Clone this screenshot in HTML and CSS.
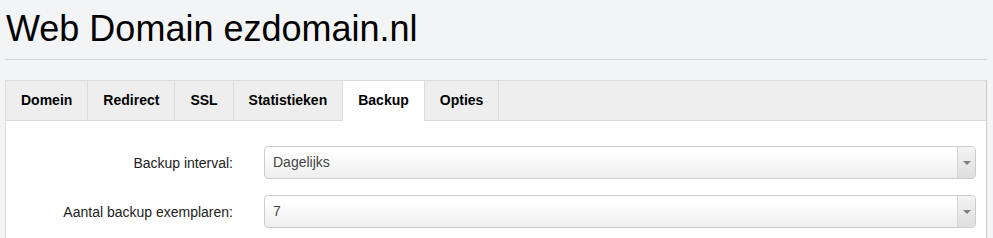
FILE: index.html
```html
<!DOCTYPE html>
<html>
<head>
<meta charset="utf-8">
<meta name="viewport" content="width=device-width">
<link rel="stylesheet" href="styles.css">
</head>
<body>
  <div class="page">
    <h1 class="title">Web Domain ezdomain.nl</h1>
    <hr class="rule">
    <div class="panel">
      <ul class="tabs">
        <li>Domein</li>
        <li>Redirect</li>
        <li>SSL</li>
        <li>Statistieken</li>
        <li class="active">Backup</li>
        <li>Opties</li>
      </ul>
      <div class="panel-body">
        <div class="field">
          <label>Backup interval:</label>
          <div class="select"><span class="value">Dagelijks</span><span class="arrow"></span></div>
        </div>
        <div class="field">
          <label>Aantal backup exemplaren:</label>
          <div class="select"><span class="value">7</span><span class="arrow"></span></div>
        </div>
      </div>
    </div>
  </div>
</body>
</html>
```

FILE: styles.css
```css
html, body {
  margin: 0;
  background: #f3f4f6;
  font-family: "Liberation Sans", Arial, sans-serif;
  color: #000;
}
.page {
  padding: 0 6px 0 5px;
}
.title {
  margin: 9px 0 0 1px;
  font-size: 36px;
  line-height: 40px;
  font-weight: normal;
}
.rule {
  margin: 10px 0 20px 0;
  border: 0;
  border-top: 1px solid #d3d4d6;
  height: 0;
}
.panel {
  background: #fff;
  border: 1px solid #dcdcdc;
  border-right-color: #c8c8c8;
  border-bottom: 0;
}
.tabs {
  display: flex;
  margin: 0;
  padding: 0;
  list-style: none;
  background: #eeeeee;
  border-bottom: 1px solid #dcdcdc;
  height: 39px;
}
.tabs li {
  padding: 0 15px;
  border-right: 1px solid #dcdcdc;
  font-size: 14px;
  font-weight: bold;
  line-height: 39px;
}
.tabs li.active {
  background: #fff;
  height: 40px;
}
.panel-body {
  padding: 25px 10px 10px 0;
  display: flex;
  flex-direction: column;
  gap: 16px;
}
.field {
  display: grid;
  grid-template-columns: 227px 1fr;
  column-gap: 31px;
  align-items: center;
}
.field label {
  text-align: right;
  font-size: 14px;
  color: #222;
}
.select {
  display: flex;
  height: 31px;
  border: 1px solid #cccccc;
  border-radius: 4px;
  background: linear-gradient(#ffffff 20%, #eeeeee);
}
.select .value {
  flex: 1;
  padding-left: 8px;
  font-size: 14px;
  line-height: 31px;
  color: #444;
}
.select .arrow {
  width: 17px;
  border-left: 1px solid #d6d6d6;
  border-radius: 0 4px 4px 0;
  background: linear-gradient(#f4f4f4, #dedede);
  display: flex;
  align-items: center;
  justify-content: center;
}
.select .arrow::after {
  content: "";
  border-left: 4px solid transparent;
  border-right: 4px solid transparent;
  border-top: 4px solid #808080;
}
```
